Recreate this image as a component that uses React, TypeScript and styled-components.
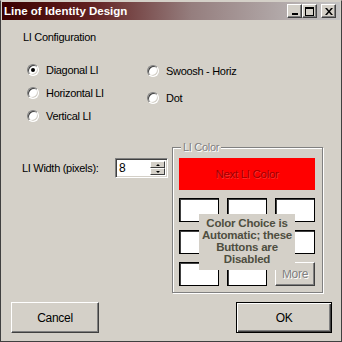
import React from 'react';
import styled, { createGlobalStyle } from 'styled-components';

const GlobalStyle = createGlobalStyle`
  html, body {
    margin: 0;
    padding: 0;
    background: #d4d0c8;
  }
  body {
    font-family: "Liberation Sans", Arial, sans-serif;
    font-size: 11px;
    letter-spacing: -0.3px;
    color: #000;
  }
`;

const Window = styled.div`
  box-sizing: border-box;
  width: 342px;
  height: 342px;
  background: #d4d0c8;
  border-style: solid;
  border-width: 1px;
  border-color: #d4d0c8 #404040 #404040 #404040;
  padding: 1px;
  display: flex;
  flex-direction: column;
`;

const TitleBar = styled.div`
  height: 18px;
  display: flex;
  align-items: center;
  padding: 0 4px 0 2px;
  background: linear-gradient(to right, #3a0000 0%, #622020 26%, #957e7e 56%, #c4c4c4 100%);
`;

const TitleText = styled.span`
  flex: 1;
  color: #fff;
  font-weight: bold;
  font-size: 11.5px;
  letter-spacing: 0;
  line-height: 18px;
  white-space: nowrap;
`;

const CaptionButton = styled.div<{ $gap?: number }>`
  box-sizing: border-box;
  width: 15px;
  height: 14px;
  margin-left: ${p => p.$gap ?? 0}px;
  background: #d4d0c8;
  border-style: solid;
  border-width: 1px;
  border-color: #fff #404040 #404040 #fff;
  box-shadow: inset -1px -1px 0 #808080;
  display: flex;
  align-items: center;
  justify-content: center;
`;

const Main = styled.div`
  padding: 11px 0 0 21px;
  display: flex;
  flex-direction: column;
`;

const SectionLabel = styled.div`
  line-height: 13px;
`;

const RadioArea = styled.div`
  display: flex;
  margin: 13px 0 0 4px;
`;

const RadioColumn = styled.div<{ $width?: number; $top: number }>`
  display: flex;
  flex-direction: column;
  width: ${p => (p.$width ? `${p.$width}px` : 'auto')};
  padding-top: ${p => p.$top}px;
`;

const RadioRow = styled.label<{ $height: number }>`
  display: flex;
  align-items: center;
  gap: 7px;
  height: ${p => p.$height}px;
  white-space: nowrap;
`;

const RadioCircle = styled.span<{ $checked?: boolean }>`
  box-sizing: border-box;
  position: relative;
  width: 12px;
  height: 12px;
  border-radius: 50%;
  background: #fff;
  border: 1px solid;
  border-color: #808080 #fff #fff #808080;
  box-shadow: inset 1px 1px 0 #404040, inset -1px -1px 0 #d4d0c8;
  flex-shrink: 0;

  &::after {
    content: '';
    display: ${p => (p.$checked ? 'block' : 'none')};
    position: absolute;
    left: 3px;
    top: 3px;
    width: 4px;
    height: 4px;
    border-radius: 50%;
    background: #000;
  }
`;

const LowerRow = styled.div`
  display: flex;
  margin: 20px 0 0 -1px;
`;

const WidthField = styled.div`
  display: flex;
  align-items: center;
  width: 150px;
  height: 20px;
  margin-top: 11px;
`;

const FieldLabel = styled.span`
  width: 93px;
  white-space: nowrap;
`;

const Spinner = styled.div`
  box-sizing: border-box;
  width: 53px;
  height: 20px;
  display: flex;
  background: #fff;
  border-style: solid;
  border-width: 1px;
  border-color: #808080 #fff #fff #808080;
  box-shadow: inset 1px 1px 0 #404040, inset -1px -1px 0 #d4d0c8;
  padding: 2px 2px 2px 3px;
`;

const SpinValue = styled.span`
  flex: 1;
  font-size: 12px;
  line-height: 14px;
`;

const SpinButtons = styled.div`
  display: flex;
  flex-direction: column;
  width: 15px;
`;

const SpinButton = styled.div<{ $down?: boolean }>`
  box-sizing: border-box;
  flex: 1;
  background: #d4d0c8;
  border-style: solid;
  border-width: 1px;
  border-color: #fff #404040 #404040 #fff;
  display: flex;
  align-items: center;
  justify-content: center;

  &::before {
    content: '';
    width: 0;
    height: 0;
    border-left: 2px solid transparent;
    border-right: 2px solid transparent;
    ${p => (p.$down ? 'border-top: 2px solid #000;' : 'border-bottom: 2px solid #000;')}
  }
`;

const GroupBox = styled.div`
  box-sizing: border-box;
  position: relative;
  width: 151px;
  border: 1px solid #808080;
  box-shadow: inset 1px 1px 0 #fff, 1px 1px 0 #fff;
  padding: 10px 7px 6px 6px;
  display: flex;
  flex-direction: column;
  gap: 8px;
`;

const GroupLegend = styled.span`
  position: absolute;
  top: -7px;
  left: 8px;
  padding: 0 2px;
  background: #d4d0c8;
  line-height: 13px;
  color: #808080;
  text-shadow: 1px 1px 0 #fff;
`;

const ColorButton = styled.div`
  height: 32px;
  background: #ff0000;
  color: #a00000;
  text-shadow: 1px 1px 0 #ff3030;
  display: flex;
  align-items: center;
  justify-content: center;
  font-size: 11.5px;
`;

const SwatchGrid = styled.div`
  position: relative;
  display: grid;
  grid-template-columns: repeat(3, 40px);
  grid-auto-rows: 24px;
  gap: 8px;
`;

const Swatch = styled.div`
  box-sizing: border-box;
  background: #fff;
  border: 1px solid #000;
  box-shadow: inset 1px 1px 0 #404040;
`;

const MoreButton = styled.div`
  box-sizing: border-box;
  background: #d4d0c8;
  border-style: solid;
  border-width: 1px;
  border-color: #fff #404040 #404040 #fff;
  box-shadow: inset -1px -1px 0 #808080;
  color: #808080;
  text-shadow: 1px 1px 0 #fff;
  display: flex;
  align-items: center;
  justify-content: center;
  font-size: 12px;
`;

const Notice = styled.div`
  position: absolute;
  left: 20px;
  top: 16px;
  width: 96px;
  height: 56px;
  box-sizing: border-box;
  padding-top: 3px;
  background: #d4d0c8;
  color: #4e4e40;
  font-weight: bold;
  font-size: 11.5px;
  letter-spacing: -0.2px;
  line-height: 12px;
  text-align: center;
`;

const Footer = styled.div`
  display: flex;
  justify-content: space-between;
  padding: 9px 8px 0 9px;
`;

const PushButton = styled.div<{ $default?: boolean; $width: number }>`
  box-sizing: border-box;
  width: ${p => p.$width}px;
  height: 31px;
  background: #d4d0c8;
  display: flex;
  align-items: center;
  justify-content: center;
  font-size: 12px;
  ${p =>
    p.$default
      ? `border: 1px solid #000;
         box-shadow: inset 1px 1px 0 #fff, inset -1px -1px 0 #404040, inset -2px -2px 0 #808080;`
      : `border-style: solid;
         border-width: 1px;
         border-color: #fff #404040 #404040 #fff;
         box-shadow: inset -1px -1px 0 #808080;`}
`;

const MinIcon = () => (
  <svg width="8" height="7" viewBox="0 0 8 7">
    <rect x="1" y="5" width="6" height="2" fill="#000" />
  </svg>
);

const MaxIcon = () => (
  <svg width="9" height="9" viewBox="0 0 9 9">
    <path d="M0 0h9v9H0z M1 2v6h7V2z" fill="#000" fillRule="evenodd" />
  </svg>
);

const CloseIcon = () => (
  <svg width="8" height="7" viewBox="0 0 8 7">
    <path d="M0 0h2l2 2.5L6 0h2L5 3.5 8 7H6L4 4.5 2 7H0l3-3.5z" fill="#000" />
  </svg>
);

const App = (): JSX.Element => {
  return (
    <>
      <GlobalStyle />
      <Window>
        <TitleBar>
          <TitleText>Line of Identity Design</TitleText>
          <CaptionButton>
            <MinIcon />
          </CaptionButton>
          <CaptionButton>
            <MaxIcon />
          </CaptionButton>
          <CaptionButton $gap={4}>
            <CloseIcon />
          </CaptionButton>
        </TitleBar>
        <Main>
          <SectionLabel>LI Configuration</SectionLabel>
          <RadioArea>
            <RadioColumn $width={120} $top={1}>
              <RadioRow $height={23}>
                <RadioCircle $checked />
                Diagonal LI
              </RadioRow>
              <RadioRow $height={23}>
                <RadioCircle />
                Horizontal LI
              </RadioRow>
              <RadioRow $height={23}>
                <RadioCircle />
                Vertical LI
              </RadioRow>
            </RadioColumn>
            <RadioColumn $top={0}>
              <RadioRow $height={27}>
                <RadioCircle />
                Swoosh - Horiz
              </RadioRow>
              <RadioRow $height={27}>
                <RadioCircle />
                Dot
              </RadioRow>
            </RadioColumn>
          </RadioArea>
          <LowerRow>
            <WidthField>
              <FieldLabel>LI Width (pixels):</FieldLabel>
              <Spinner>
                <SpinValue>8</SpinValue>
                <SpinButtons>
                  <SpinButton />
                  <SpinButton $down />
                </SpinButtons>
              </Spinner>
            </WidthField>
            <GroupBox>
              <GroupLegend>LI Color</GroupLegend>
              <ColorButton>Next LI Color</ColorButton>
              <SwatchGrid>
                {Array.from({ length: 8 }).map((_, i) => (
                  <Swatch key={i} />
                ))}
                <MoreButton>More</MoreButton>
                <Notice>
                  Color Choice is
                  <br />
                  Automatic; these
                  <br />
                  Buttons are
                  <br />
                  Disabled
                </Notice>
              </SwatchGrid>
            </GroupBox>
          </LowerRow>
        </Main>
        <Footer>
          <PushButton $width={88}>Cancel</PushButton>
          <PushButton $width={96} $default>
            OK
          </PushButton>
        </Footer>
      </Window>
    </>
  );
};

export default App;
